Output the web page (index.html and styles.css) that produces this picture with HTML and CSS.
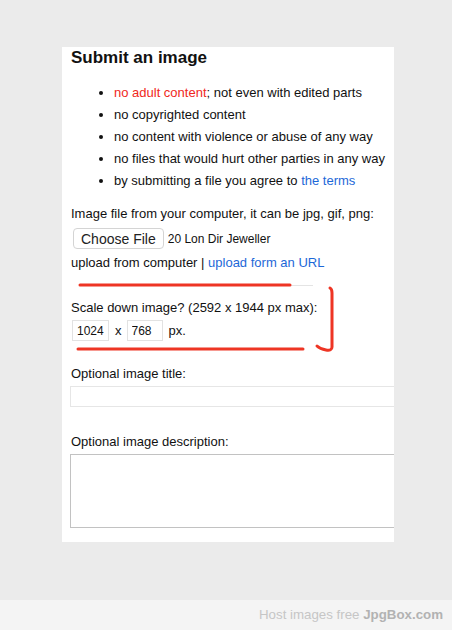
FILE: index.html
```html
<!DOCTYPE html>
<html lang="en">
<head>
  <meta charset="UTF-8">
  <title>Submit an image - JpgBox</title>
  <link rel="stylesheet" href="styles.css">
</head>
<body>
<div class="page">
  <main class="card">
    <h2>Submit an image</h2>
    <ul class="rules">
      <li><span class="warn">no adult content</span>; not even with edited parts</li>
      <li>no copyrighted content</li>
      <li>no content with violence or abuse of any way</li>
      <li>no files that would hurt other parties in any way</li>
      <li>by submitting a file you agree to <a href="#">the terms</a></li>
    </ul>

    <p class="label">Image file from your computer, it can be jpg, gif, png:</p>
    <div class="file-row">
      <button class="file-btn" type="button">Choose File</button>
      <span class="file-name">20 Lon Dir Jeweller</span>
    </div>
    <p class="label switch">upload from computer | <a href="#">upload form an URL</a></p>

    <hr class="sep">

    <p class="label">Scale down image? (2592 x 1944 px max):</p>
    <div class="size-row">
      <input class="size" type="text" value="1024">
      <span>x</span>
      <input class="size short" type="text" value="768">
      <span>px.</span>
    </div>

    <p class="label gap">Optional image title:</p>
    <input class="title-input" type="text">

    <p class="label gap wide">Optional image description:</p>
    <textarea class="desc"></textarea>
  </main>

  <footer class="foot">Host images free <b>JpgBox.com</b></footer>
</div>

<!-- marker scribbles drawn over the screenshot -->
<svg class="marks" width="452" height="630" viewBox="0 0 452 630">
  <path d="M80 285 L290 285" />
  <path d="M78 349 L303 349" />
  <path d="M330 288 Q332 289 332 293 L332 347 Q332 351 326 350 Q320 349 317 346" />
</svg>
</body>
</html>
```

FILE: styles.css
```css
* { box-sizing: border-box; }
body {
  margin: 0;
  background: #ebebeb;
  font-family: "Liberation Sans", Arial, sans-serif;
  color: #111;
  position: relative;
}
.page {
  min-height: 100vh;
  display: flex;
  flex-direction: column;
}
.card {
  width: 332px;
  margin: 47px 0 0 62px;
  padding: 1px 0 14px 9px;
  background: #fff;
  overflow: hidden;
}
h2 {
  margin: 0;
  font-size: 17px;
  line-height: 20px;
}
.rules {
  margin: 14px 0 0;
  padding-left: 43px;
  font-size: 13px;
  line-height: 22px;
}
.warn { color: #f0281c; }
a { color: #1d68d8; text-decoration: none; }

.label {
  margin: 13px 0 0;
  font-size: 13px;
  line-height: 18px;
}
.label.switch { margin-top: 5px; }
.label.gap { margin-top: 24px; }
.label.wide { margin-top: 26px; }

.file-row {
  display: flex;
  align-items: center;
  gap: 4px;
  margin: 5px 0 0 2px;
}
.file-btn {
  height: 21px;
  padding: 0 7px;
  background: #fff;
  border: 1px solid #d4d4d4;
  border-radius: 4px;
  font-family: inherit;
  font-size: 14px;
  color: #222;
}
.file-name { font-size: 12px; }

.sep {
  width: 233px;
  margin: 13px 0 0 9px;
  border: none;
  border-top: 1px solid #e4e4e4;
}

.size-row {
  display: flex;
  align-items: center;
  gap: 6px;
  margin: 3px 0 0 1px;
  font-size: 13px;
}
.size {
  width: 37px;
  height: 21px;
  padding: 0 4px;
  border: 1px solid #e2e2e2;
  font-family: inherit;
  font-size: 12px;
  color: #111;
}
.size.short { width: 36px; margin-left: -1px; }

.title-input {
  display: block;
  width: 340px;
  height: 21px;
  margin: 3px 0 0 -1px;
  border: 1px solid #e6e6e6;
}
.desc {
  display: block;
  width: 340px;
  height: 74px;
  margin: 3px 0 0 -1px;
  border: 1px solid #c2c2c2;
  resize: none;
}

.foot {
  margin-top: auto;
  height: 30px;
  padding-right: 9px;
  background: #f4f4f4;
  text-align: right;
  line-height: 30px;
  font-size: 13.3px;
  color: #c6c6c6;
}
.foot b { font-weight: bold; color: #b2b2b2; }

.marks {
  position: absolute;
  top: 0;
  left: 0;
  pointer-events: none;
}
.marks path {
  fill: none;
  stroke: #ee3524;
  stroke-width: 3;
  stroke-linecap: round;
  stroke-linejoin: round;
}
```
